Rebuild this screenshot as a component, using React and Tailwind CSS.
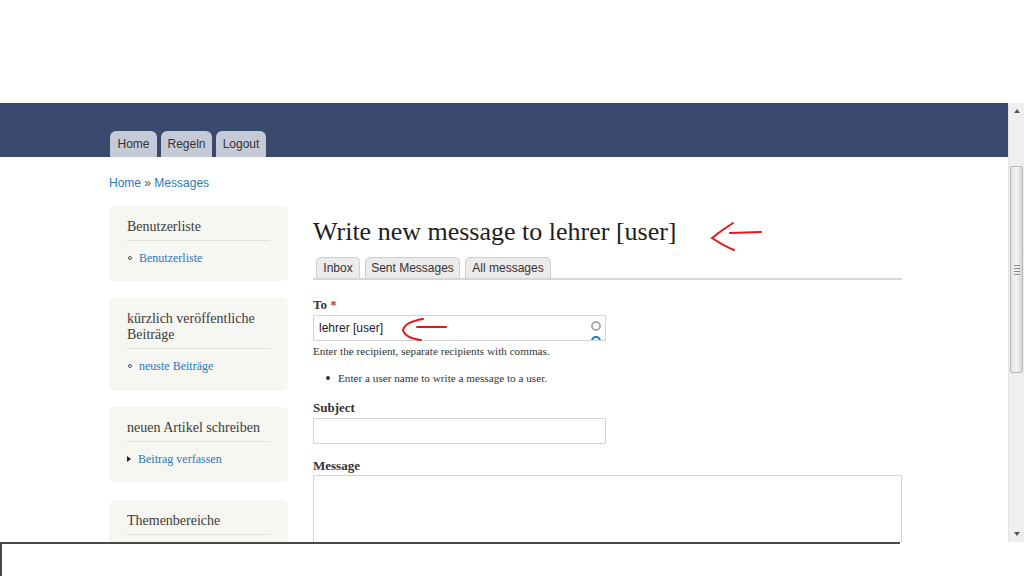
import React from "react";

const serif = { fontFamily: '"Liberation Serif", "Times New Roman", serif' };
const sans = { fontFamily: '"Liberation Sans", Arial, sans-serif' };

function Block({ title, children, extra = "" }) {
  return (
    <div className={"bg-[#f6f6f2] rounded-[6px] pt-[13px] px-[18px] pb-[15px] " + extra}>
      <div className="text-[14px] leading-[16px] text-[#3b3b3b] pb-[5px] border-b border-[#e2e2dc]" style={serif}>
        {title}
      </div>
      <div className="mt-[9px]">{children}</div>
    </div>
  );
}

function CircleItem({ children }) {
  return (
    <div className="flex items-center text-[12px] leading-[16px] text-[#2a78bd]" style={serif}>
      <span className="w-[4px] h-[4px] rounded-full border border-[#555] ml-[1px] mr-[6px]" />
      <span className="ml-[1px]">{children}</span>
    </div>
  );
}

export default function App() {
  return (
    <div className="w-[1024px] h-[576px] bg-white overflow-hidden relative">
      <div className="h-[103px]" />
      <div className="flex h-[439px]">
        <div className="w-[1008px] overflow-hidden">
          {/* header */}
          <div className="h-[54px] bg-[#3a4a6f] flex items-end pl-[110px] gap-[4px]">
            {[["Home", 47], ["Regeln", 51], ["Logout", 50]].map(([t, w]) => (
              <div
                key={t}
                className="h-[26px] rounded-t-[6px] bg-[#c6c9d6] flex items-center justify-center text-[12px] text-[#333]"
                style={{ ...sans, width: w }}
              >
                {t}
              </div>
            ))}
          </div>
          {/* breadcrumb */}
          <div className="pl-[109px] pt-[19px] text-[12px] leading-[14px] text-[#2a7ab8]" style={sans}>
            Home <span className="text-[#555]">»</span> Messages
          </div>
          <div className="flex pl-[109px] pt-[16px]">
            {/* sidebar */}
            <div className="w-[179px] flex flex-col">
              <Block title="Benutzerliste" extra="mb-[17px]">
                <CircleItem>Benutzerliste</CircleItem>
              </Block>
              <Block title={<>kürzlich veröffentliche<br />Beiträge</>} extra="mb-[16px] pb-[17px]">
                <CircleItem>neuste Beiträge</CircleItem>
              </Block>
              <Block title="neuen Artikel schreiben" extra="mb-[18px]">
                <div className="flex items-center text-[12px] leading-[16px] text-[#2a78bd]" style={serif}>
                  <span className="w-0 h-0 border-y-[3px] border-y-transparent border-l-[4px] border-l-[#222] mr-[7px]" />
                  <span>Beitrag verfassen</span>
                </div>
              </Block>
              <Block title="Themenbereiche">
                <div className="h-[40px]" />
              </Block>
            </div>
            {/* main */}
            <div className="w-[589px] ml-[25px] relative">
              <div className="text-[26px] leading-[30px] text-[#1e1e1e] mt-[11px]" style={serif}>
                Write new message to lehrer [user]
              </div>
              <div className="mt-[10px] flex items-end gap-[5px] pl-[3px] border-b-2 border-[#d6d6d6] h-[23px]">
                {[["Inbox", 44], ["Sent Messages", 95], ["All messages", 86]].map(([t, w]) => (
                  <div
                    key={t}
                    className="h-[21px] rounded-t-[5px] bg-[#ebebeb] border border-b-0 border-[#cfcfcf] flex items-center justify-center text-[12px] text-[#333]"
                    style={{ ...sans, width: w }}
                  >
                    {t}
                  </div>
                ))}
              </div>
              <div className="mt-[17px] text-[13px] leading-[16px] font-bold text-[#333]" style={serif}>
                To <span className="text-[#e0312f]">*</span>
              </div>
              <div className="mt-[2px] w-[293px] h-[26px] border border-[#d4d4d4] relative overflow-hidden flex items-center pl-[5px] text-[12px] text-[#222]" style={sans}>
                lehrer [user]
                <span className="absolute right-[4px] top-[5px] w-[10px] h-[10px] rounded-full border-2 border-[#aaa]" />
                <span className="absolute right-[4px] top-[20px] w-[10px] h-[10px] rounded-full border-2 border-[#1a7bd0]" />
              </div>
              <div className="mt-[3px] text-[11.2px] leading-[14px] text-[#333]" style={serif}>
                Enter the recipient, separate recipients with commas.
              </div>
              <div className="mt-[13px] flex items-center text-[11.2px] leading-[14px] text-[#333]" style={serif}>
                <span className="w-[4px] h-[4px] rounded-full bg-[#333] ml-[13px] mr-[8px]" />
                Enter a user name to write a message to a user.
              </div>
              <div className="mt-[15px] text-[13px] leading-[16px] font-bold text-[#333]" style={serif}>
                Subject
              </div>
              <div className="mt-[2px] w-[293px] h-[26px] border border-[#d4d4d4]" />
              <div className="mt-[14px] text-[13px] leading-[16px] font-bold text-[#333]" style={serif}>
                Message
              </div>
              <div className="mt-[1px] w-[589px] h-[120px] border border-[#d4d4d4]" />
            </div>
          </div>
        </div>
        {/* scrollbar */}
        <div className="w-[16px] h-[439px] bg-[#efefef] border-l border-[#e4e4e4] flex flex-col items-center">
          <div className="h-[16px] flex items-center justify-center">
            <span className="w-0 h-0 border-x-[3px] border-x-transparent border-b-[4px] border-b-[#555]" />
          </div>
          <div className="mt-[47px] w-[13px] h-[207px] rounded-[2px] border border-[#b8b8b8] bg-gradient-to-r from-[#e2e2e2] via-[#f4f4f4] to-[#d6d6d6] flex flex-col items-center justify-center gap-[2px]">
            <span className="w-[6px] h-px bg-[#888]" />
            <span className="w-[6px] h-px bg-[#888]" />
            <span className="w-[6px] h-px bg-[#888]" />
            <span className="w-[6px] h-px bg-[#888]" />
          </div>
          <div className="flex-1" />
          <div className="h-[16px] flex items-center justify-center">
            <span className="w-0 h-0 border-x-[3px] border-x-transparent border-t-[4px] border-t-[#555]" />
          </div>
        </div>
      </div>
      {/* bottom frame */}
      <div className="w-[900px] h-[34px] border-t-2 border-l-2 border-[#4a4a4a]" />
      {/* red annotation arrows */}
      <svg className="absolute left-0 top-0 pointer-events-none" width="1024" height="576">
        <g fill="none" stroke="#e8141a" strokeWidth="2" strokeLinecap="round">
          <path d="M730 233 L761 232" />
          <path d="M733 223 Q722 230 712 238 Q724 246 734 250" />
          <path d="M417 327 L446 327" />
          <path d="M423 319 Q405 322 403 330 Q405 338 421 340" />
        </g>
      </svg>
    </div>
  );
}
